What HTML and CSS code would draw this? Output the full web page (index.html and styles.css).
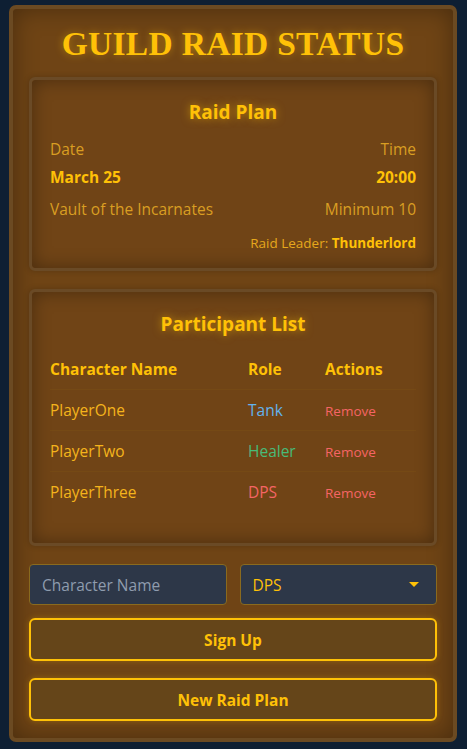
FILE: index.html
```html
<!DOCTYPE html>
<html lang="en">
<head>
    <meta charset="UTF-8">
    <meta name="viewport" content="width=device-width, initial-scale=1.0">
    <title>Guild Raid Status</title>
    <link rel="stylesheet" href="styles.css">
</head>
<body>
    <div class="container">
        <h1>Guild Raid Status</h1>

        <div class="card">
            <h2>Raid Plan</h2>
            <div class="info-row">
                <span>Date</span>
                <span>Time</span>
            </div>
            <div class="info-row value">
                <span>March 25</span>
                <span>20:00</span>
            </div>
            <div class="info-row spaced">
                <span>Vault of the Incarnates</span>
                <span>Minimum 10</span>
            </div>
            <div class="leader">Raid Leader: <strong>Thunderlord</strong></div>
        </div>

        <div class="card">
            <h2>Participant List</h2>
            <table class="participants">
                <thead>
                    <tr>
                        <th class="col-name">Character Name</th>
                        <th class="col-role">Role</th>
                        <th>Actions</th>
                    </tr>
                </thead>
                <tbody>
                    <tr>
                        <td>PlayerOne</td>
                        <td class="role tank">Tank</td>
                        <td><button class="remove-btn">Remove</button></td>
                    </tr>
                    <tr>
                        <td>PlayerTwo</td>
                        <td class="role healer">Healer</td>
                        <td><button class="remove-btn">Remove</button></td>
                    </tr>
                    <tr>
                        <td>PlayerThree</td>
                        <td class="role dps">DPS</td>
                        <td><button class="remove-btn">Remove</button></td>
                    </tr>
                </tbody>
            </table>
        </div>

        <div class="signup-form">
            <input type="text" class="field" placeholder="Character Name">
            <div class="select-wrap">
                <select class="field">
                    <option>DPS</option>
                    <option>Tank</option>
                    <option>Healer</option>
                </select>
            </div>
        </div>
        <button class="action-btn">Sign Up</button>
        <button class="action-btn">New Raid Plan</button>
    </div>
</body>
</html>
```

FILE: styles.css
```css
body {
    margin: 0;
    background-color: #0e1f33;
    font-family: "Open Sans", "Noto Sans CJK KR", sans-serif;
    color: #ffc107;
}

.container {
    width: 448px;
    box-sizing: border-box;
    margin: 5px 10px 0 9px;
    padding: 16px 16px 17px;
    border: 4px solid #6b4a22;
    border-radius: 7px;
    background-color: #6f4415;
    box-shadow: inset 0 0 24px rgba(0, 0, 0, 0.35);
}

h1 {
    margin: 0 0 15px;
    font-family: "Liberation Serif", serif;
    font-size: 33.5px;
    line-height: 37px;
    font-weight: bold;
    letter-spacing: 0.3px;
    text-align: center;
    text-transform: uppercase;
    color: #ffc107;
    text-shadow: 0 0 8px rgba(255, 193, 7, 0.45);
}

.card {
    margin-bottom: 18px;
    padding: 18px 18px 15px;
    border: 3px solid #6a4a26;
    border-radius: 6px;
    background-color: #704416;
    box-shadow: inset 0 0 18px rgba(0, 0, 0, 0.35), 0 0 6px rgba(0, 0, 0, 0.2);
}

.card h2 {
    margin: 0 0 11px;
    font-size: 19px;
    line-height: 28px;
    text-align: center;
    color: #ffc107;
    text-shadow: 0 0 8px rgba(255, 193, 7, 0.55);
}

.info-row {
    display: flex;
    justify-content: space-between;
    font-size: 15.5px;
    line-height: 24px;
    color: #d99e22;
}

.info-row.value {
    margin-top: 4px;
    font-weight: bold;
    color: #ffc107;
}

.info-row.spaced {
    margin-top: 8px;
}

.leader {
    margin-top: 12px;
    font-size: 13.5px;
    line-height: 20px;
    text-align: right;
    color: #e6a81c;
}

.leader strong {
    color: #ffc107;
}

.participants {
    width: 100%;
    border-collapse: collapse;
    table-layout: fixed;
    margin-bottom: 16px;
}

.participants th,
.participants td {
    padding: 0;
    height: 40px;
    text-align: left;
    font-size: 15.5px;
    border-bottom: 1px solid rgba(255, 193, 7, 0.04);
}

.participants tbody tr:last-child td {
    border-bottom: none;
}

.participants th {
    font-weight: bold;
    color: #ffc107;
}

.participants td {
    color: #f5b41c;
}

.col-name {
    width: 198px;
}

.col-role {
    width: 77px;
}

.role.tank {
    color: #63b3ed;
}

.role.healer {
    color: #48bb78;
}

.role.dps {
    color: #f56565;
}

.remove-btn {
    padding: 0;
    border: none;
    background: none;
    font-family: inherit;
    font-size: 13.5px;
    color: #f56565;
    cursor: pointer;
}

.signup-form {
    display: grid;
    grid-template-columns: 1fr 1fr;
    gap: 13px;
    margin-top: 17px;
    margin-bottom: 13px;
}

.field {
    width: 100%;
    height: 41px;
    box-sizing: border-box;
    padding: 0 12px;
    border: 1px solid #8a6a1e;
    border-radius: 4px;
    background-color: #2d3748;
    font-family: inherit;
    font-size: 15.5px;
    color: #ffc107;
    outline: none;
    -webkit-appearance: none;
    appearance: none;
}

.field::placeholder {
    color: #8f9cae;
}

.select-wrap {
    position: relative;
}

.select-wrap::after {
    content: "";
    position: absolute;
    right: 18px;
    top: 18px;
    border-left: 5px solid transparent;
    border-right: 5px solid transparent;
    border-top: 5px solid #ffc107;
    pointer-events: none;
}

.action-btn {
    display: block;
    width: 100%;
    height: 43px;
    margin-bottom: 17px;
    border: 2px solid #ffc107;
    border-radius: 6px;
    background-color: #654519;
    font-family: inherit;
    font-size: 15.5px;
    font-weight: bold;
    color: #ffc107;
    box-shadow: 0 0 6px rgba(255, 193, 7, 0.25);
    cursor: pointer;
}

.action-btn:last-child {
    margin-bottom: 0;
}
```
